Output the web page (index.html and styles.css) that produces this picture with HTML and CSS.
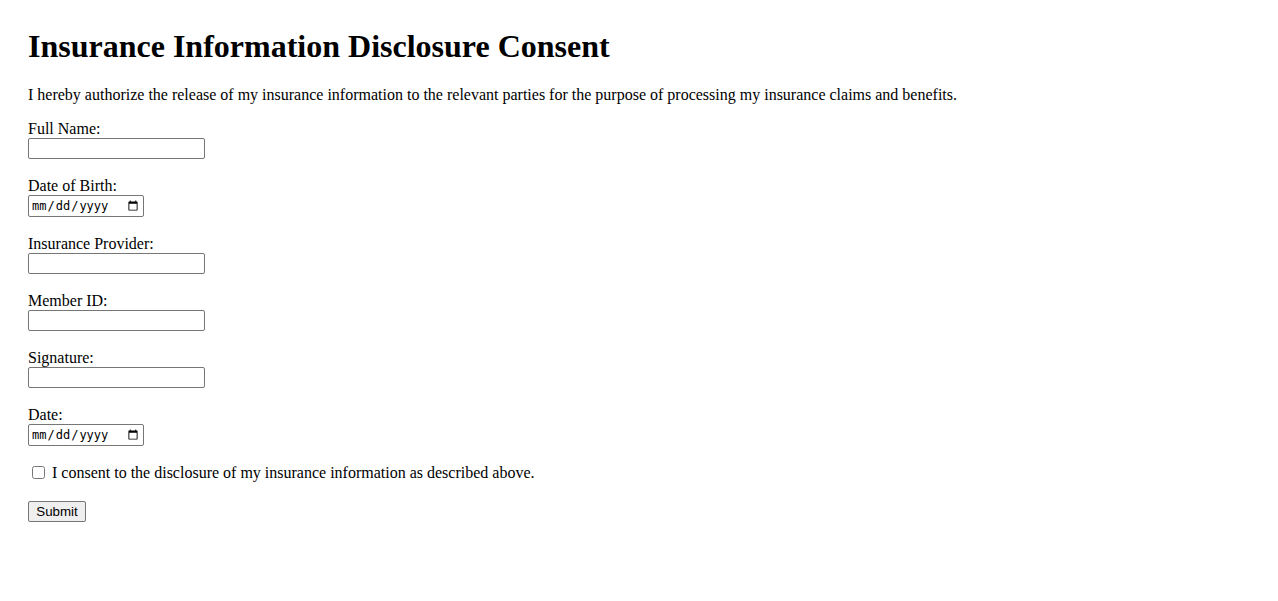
FILE: index.html
```html
<!DOCTYPE html>
<html lang="en">
<head>
<meta charset="utf-8">
<title>Insurance Information Disclosure Consent</title>
<link rel="stylesheet" href="styles.css">
</head>
<body>
<div class="page">
  <h1 class="title">Insurance Information Disclosure Consent</h1>
  <p class="intro">I hereby authorize the release of my insurance information to the relevant parties for the purpose of processing my insurance claims and benefits.</p>
  <form class="form">
    <div class="field">
      <label class="label" for="name">Full Name:</label>
      <input class="text-input" type="text" id="name">
    </div>
    <div class="field">
      <label class="label" for="dob">Date of Birth:</label>
      <input class="date-input" type="date" id="dob">
    </div>
    <div class="field">
      <label class="label" for="provider">Insurance Provider:</label>
      <input class="text-input" type="text" id="provider">
    </div>
    <div class="field">
      <label class="label" for="member">Member ID:</label>
      <input class="text-input" type="text" id="member">
    </div>
    <div class="field">
      <label class="label" for="sig">Signature:</label>
      <input class="text-input" type="text" id="sig">
    </div>
    <div class="field">
      <label class="label" for="date">Date:</label>
      <input class="date-input" type="date" id="date">
    </div>
    <div class="consent">
      <input class="checkbox" type="checkbox" id="consent">
      <label class="consent-label" for="consent">I consent to the disclosure of my insurance information as described above.</label>
    </div>
    <button class="submit" type="submit">Submit</button>
  </form>
</div>
</body>
</html>
```

FILE: styles.css
```css
html, body {
  margin: 0;
  padding: 0;
  background: #ffffff;
}

body {
  font-family: "Liberation Serif", "Times New Roman", serif;
  font-size: 16px;
  color: #000000;
}

.page {
  padding: 28px;
}

.title {
  margin: 0 0 21px 0;
  font-size: 32px;
  font-weight: bold;
  line-height: 37px;
}

.intro {
  margin: 0 0 16px 0;
  line-height: 18px;
}

.form {
  display: flex;
  flex-direction: column;
  align-items: flex-start;
}

.field {
  display: flex;
  flex-direction: column;
  align-items: flex-start;
  margin-bottom: 18px;
}

.label {
  display: block;
  line-height: 18px;
}

.text-input {
  box-sizing: border-box;
  width: 177px;
  height: 21px;
  margin: 0;
  padding: 1px 2px;
  border: 1px solid #767676;
  border-radius: 2px;
  font-family: "Liberation Sans", Arial, sans-serif;
  font-size: 13.33px;
}

.date-input {
  box-sizing: border-box;
  width: 116px;
  height: 22px;
  margin: 0;
  padding: 1px 2px;
  border: 1px solid #767676;
  border-radius: 2px;
  font-family: "DejaVu Sans Mono", "Liberation Mono", monospace;
  font-size: 12px;
}

.consent {
  display: flex;
  align-items: flex-start;
  height: 18px;
  margin-bottom: 19px;
}

.checkbox {
  width: 13px;
  height: 13px;
  margin: 2px 7px 0 4px;
}

.consent-label {
  line-height: 18px;
}

.submit {
  box-sizing: border-box;
  height: 21px;
  width: 58px;
  padding: 1px 6px;
  margin: 0;
  border: 1px solid #767676;
  border-radius: 2px;
  background: #efefef;
  font-family: "Liberation Sans", Arial, sans-serif;
  font-size: 13.33px;
  color: #000;
}
```
